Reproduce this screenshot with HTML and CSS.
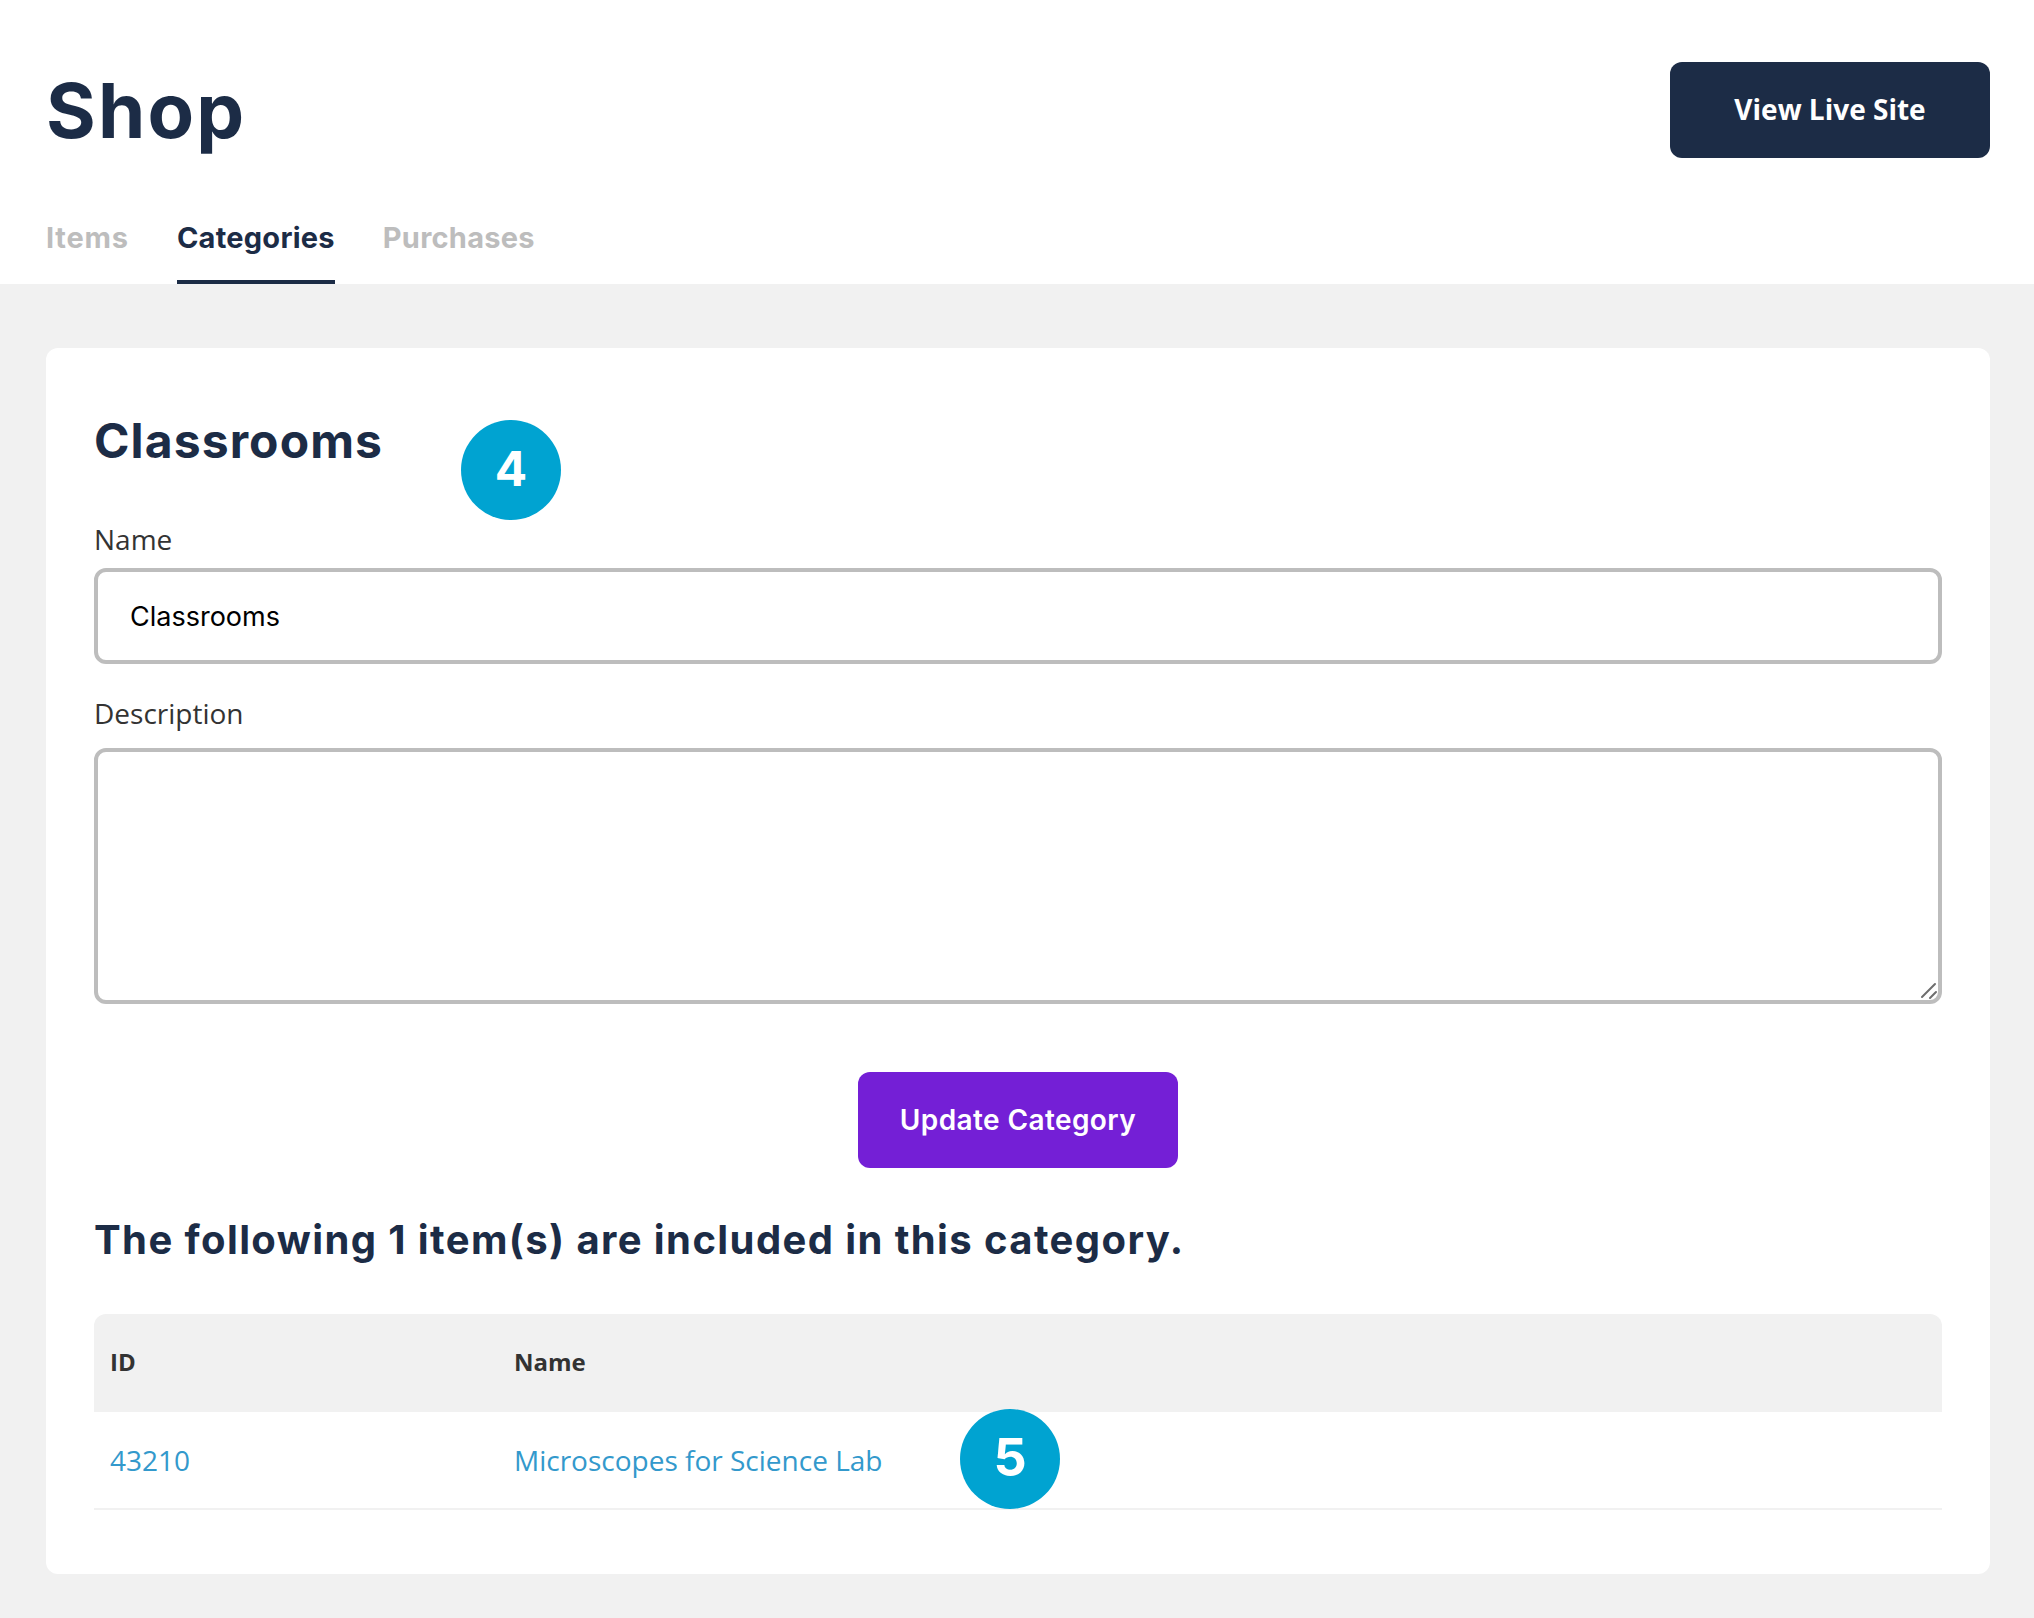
FILE: index.html
```html
<!DOCTYPE html>
<html lang="en">
<head>
  <meta charset="UTF-8">
  <title>Shop</title>
  <link rel="stylesheet" href="styles.css">
</head>
<body>

  <header class="top">
    <div class="top-row">
      <h1 class="top-title">Shop</h1>
      <a class="live-btn" href="#">View Live Site</a>
    </div>
    <nav class="tabs">
      <a class="tab" href="#">Items</a>
      <a class="tab is-active" href="#">Categories</a>
      <a class="tab" href="#">Purchases</a>
    </nav>
  </header>

  <main class="page">
    <section class="card">
      <div class="card-head">
        <h2 class="card-title">Classrooms</h2>
        <span class="badge badge-four">4</span>
      </div>

      <label class="field-label" for="cat-name">Name</label>
      <input class="field-input" id="cat-name" type="text" value="Classrooms">

      <label class="field-label field-label-desc" for="cat-desc">Description</label>
      <div class="area-wrap">
        <textarea class="field-area" id="cat-desc"></textarea>
        <svg class="area-grip" width="20" height="20" viewBox="0 0 20 20" aria-hidden="true">
          <path d="M3 16 L16 3 M11 17 L17 11" stroke="#6e6e6e" stroke-width="2" stroke-linecap="round" fill="none"/>
        </svg>
      </div>

      <div class="actions">
        <button class="update-btn" type="button">Update Category</button>
      </div>

      <h3 class="list-title">The following 1 item(s) are included in this category.</h3>

      <div class="table-wrap">
        <table class="items">
          <thead>
            <tr>
              <th class="col-id">ID</th>
              <th>Name</th>
            </tr>
          </thead>
          <tbody>
            <tr>
              <td><a href="#">43210</a></td>
              <td><a href="#">Microscopes for Science Lab</a></td>
            </tr>
          </tbody>
        </table>
        <span class="badge badge-five">5</span>
      </div>
    </section>
  </main>

</body>
</html>
```

FILE: styles.css
```css
* {
  box-sizing: border-box;
}

body {
  margin: 0;
  font-family: "Open Sans", sans-serif;
  color: #333;
  background-color: #f1f1f1;
}

a {
  text-decoration: none;
}

/* header */
.top {
  height: 284px;
  padding: 62px 44px 0 46px;
  background-color: #fff;
}
.top-row {
  display: flex;
  justify-content: space-between;
  align-items: center;
  height: 96px;
}
.top-title {
  margin: 0;
  font-family: Inter, sans-serif;
  font-size: 76px;
  font-weight: 700;
  line-height: 96px;
  letter-spacing: 2.2px;
  color: #1c2c46;
}
.live-btn {
  display: flex;
  align-items: center;
  justify-content: center;
  width: 320px;
  height: 96px;
  padding-bottom: 2px;
  border-radius: 12px;
  font-size: 28px;
  font-weight: 700;
  color: #fff;
  background-color: #1c2c46;
}

.tabs {
  display: flex;
  align-items: flex-end;
  gap: 48px;
  height: 126px;
}
.tab {
  height: 76px;
  border-bottom: 4px solid transparent;
  font-family: Inter, sans-serif;
  font-size: 29px;
  font-weight: 700;
  line-height: 60px;
  letter-spacing: .25px;
  color: #bdbdbd;
}
.tab:first-child {
  letter-spacing: .8px;
}
.tab.is-active {
  border-bottom-color: #1c2c46;
  color: #1c2c46;
}

/* card */
.page {
  padding: 64px 44px 44px 46px;
}
.card {
  height: 1226px;
  padding: 48px;
  border-radius: 12px;
  background-color: #fff;
}
.card-head {
  position: relative;
  height: 122px;
}
.card-title {
  margin: 0;
  font-family: Inter, sans-serif;
  font-size: 48px;
  font-weight: 700;
  line-height: 90px;
  letter-spacing: 1.1px;
  color: #1c2c46;
}

.badge {
  position: absolute;
  display: flex;
  align-items: center;
  justify-content: center;
  width: 100px;
  height: 100px;
  padding-bottom: 4px;
  border-radius: 50%;
  font-family: Inter, sans-serif;
  font-weight: 700;
  color: #fff;
  background-color: #00a3d1;
}
.badge-four {
  left: 367px;
  top: 24px;
  font-size: 48px;
}
.badge-five {
  left: 866px;
  top: 95px;
  font-size: 52px;
}

.field-label {
  display: block;
  height: 50px;
  font-size: 28px;
  line-height: 42px;
}
.field-label-desc {
  height: 63px;
  margin-top: 21px;
  line-height: 56px;
}
.field-input,
.field-area {
  display: block;
  width: 100%;
  padding: 0 32px;
  border: 4px solid #bdbdbd;
  border-radius: 12px;
  outline: none;
  font-family: Inter, sans-serif;
  font-size: 27px;
  color: #000;
  background-color: #fff;
}
.field-input {
  height: 96px;
}
.field-area {
  height: 256px;
  resize: none;
}
.area-wrap {
  position: relative;
}
.area-grip {
  position: absolute;
  right: 3px;
  bottom: 3px;
}

.actions {
  display: flex;
  justify-content: center;
  margin-top: 68px;
}
.update-btn {
  width: 320px;
  height: 96px;
  border: 0;
  border-radius: 12px;
  font-family: Inter, sans-serif;
  font-size: 28px;
  font-weight: 600;
  letter-spacing: .4px;
  color: #fff;
  background-color: #741fd6;
}

.list-title {
  margin: 46px 0 0;
  font-family: Inter, sans-serif;
  font-size: 40px;
  font-weight: 700;
  line-height: 52px;
  letter-spacing: 1.4px;
  color: #1c2c46;
}

/* table */
.table-wrap {
  position: relative;
  margin-top: 48px;
}
.items {
  width: 100%;
  border-collapse: separate;
  border-spacing: 0;
  font-size: 28px;
}
.items th {
  height: 98px;
  padding: 0 16px 4px;
  font-size: 24px;
  font-weight: 700;
  text-align: left;
  background-color: #f1f1f1;
}
.items th:first-child {
  border-top-left-radius: 12px;
}
.items th:last-child {
  border-top-right-radius: 12px;
}
.items td {
  height: 98px;
  padding: 0 16px;
  border-bottom: 2px solid #f1f1f1;
}
.items a {
  color: #3399cc;
}
.col-id {
  width: 404px;
}
```
